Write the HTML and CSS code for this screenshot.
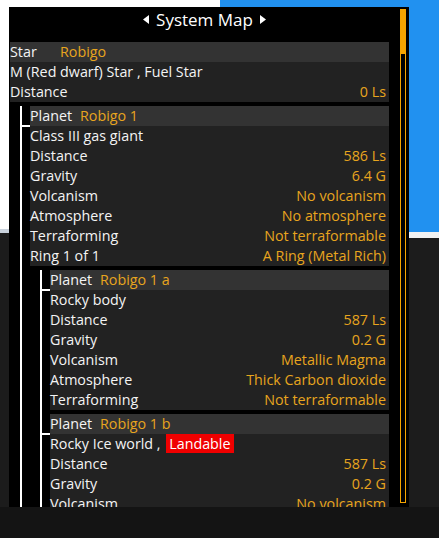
FILE: index.html
```html
<!DOCTYPE html>
<html lang="en">

<head>
    <meta charset="UTF-8">
    <meta name="viewport" content="width=device-width, initial-scale=1.0">
    <title>System Map</title>
    <link rel="stylesheet" href="styles.css">
</head>

<body>
    <div class="window">
        <div class="main">
            <!-- Title bar -->
            <div class="title">
                <svg class="arrow" width="7" height="9" viewBox="0 0 7 9"><polygon points="6,0 6,9 0,4.5" fill="#fff"/></svg>
                <span>System Map</span>
                <svg class="arrow" width="7" height="9" viewBox="0 0 7 9"><polygon points="1,0 1,9 7,4.5" fill="#fff"/></svg>
            </div>

            <!-- Tree of bodies -->
            <div class="tree">
                <div class="node">
                    <div class="row head"><span class="label">Star</span><span class="name">Robigo</span></div>
                    <div class="row"><span>M (Red dwarf) Star , Fuel Star</span></div>
                    <div class="row"><span>Distance</span><span class="val">0 Ls</span></div>

                    <div class="children">
                        <div class="node child">
                            <div class="row head"><span class="label">Planet</span><span class="name">Robigo 1</span></div>
                            <div class="row"><span>Class III gas giant</span></div>
                            <div class="row"><span>Distance</span><span class="val">586 Ls</span></div>
                            <div class="row"><span>Gravity</span><span class="val">6.4 G</span></div>
                            <div class="row"><span>Volcanism</span><span class="val">No volcanism</span></div>
                            <div class="row"><span>Atmosphere</span><span class="val">No atmosphere</span></div>
                            <div class="row"><span>Terraforming</span><span class="val">Not terraformable</span></div>
                            <div class="row"><span>Ring 1 of 1</span><span class="val">A Ring (Metal Rich)</span></div>

                            <div class="children">
                                <div class="node child">
                                    <div class="row head"><span class="label">Planet</span><span class="name">Robigo 1 a</span></div>
                                    <div class="row"><span>Rocky body</span></div>
                                    <div class="row"><span>Distance</span><span class="val">587 Ls</span></div>
                                    <div class="row"><span>Gravity</span><span class="val">0.2 G</span></div>
                                    <div class="row"><span>Volcanism</span><span class="val">Metallic Magma</span></div>
                                    <div class="row"><span>Atmosphere</span><span class="val">Thick Carbon dioxide</span></div>
                                    <div class="row"><span>Terraforming</span><span class="val">Not terraformable</span></div>
                                </div>
                                <div class="node child">
                                    <div class="row head"><span class="label">Planet</span><span class="name">Robigo 1 b</span></div>
                                    <div class="row"><span>Rocky Ice world ,&nbsp;<span class="badge">Landable</span></span></div>
                                    <div class="row"><span>Distance</span><span class="val">587 Ls</span></div>
                                    <div class="row"><span>Gravity</span><span class="val">0.2 G</span></div>
                                    <div class="row"><span>Volcanism</span><span class="val">No volcanism</span></div>
                                </div>
                            </div>
                        </div>
                    </div>
                </div>
            </div>
        </div>

        <!-- Scrollbar -->
        <div class="scrollbar">
            <div class="thumb"></div>
            <div class="track"></div>
        </div>
    </div>
</body>

</html>
```

FILE: styles.css
```css
/* Desktop behind the window */
body {
    margin: 0;
    width: 439px;
    height: 538px;
    overflow: hidden;
    position: relative;
    font-family: 'Open Sans', 'Noto Sans', sans-serif;
    background:
        linear-gradient(#ffffff, #ffffff) 0 0 / 220px 229px no-repeat,
        linear-gradient(#c9d2dc, #c9d2dc) 0 229px / 220px 4px no-repeat,
        linear-gradient(#2191f0, #2191f0) 220px 0 / 219px 232px no-repeat,
        linear-gradient(#f2f2f2, #f2f2f2) 220px 232px / 219px 6px no-repeat,
        linear-gradient(#141414, #141414) 0 507px / 439px 31px no-repeat,
        #1c1c1c;
}

/* Main window */
.window {
    position: absolute;
    left: 9px;
    top: 7px;
    width: 400px;
    height: 500px;
    background: #000;
    display: flex;
    overflow: hidden;
}

.main {
    width: 391px;
    display: flex;
    flex-direction: column;
}

.title {
    height: 35px;
    display: flex;
    justify-content: center;
    align-items: flex-start;
    gap: 6px;
    color: #fff;
    font-size: 17px;
    line-height: 26px;
    flex-shrink: 0;
}

.title .arrow {
    margin-top: 8px;
}

.tree {
    padding-left: 1px;
    width: 379px;
    font-size: 14.3px;
    color: #f4f4f4;
}

.row {
    height: 20px;
    line-height: 20px;
    background: #222222;
    display: flex;
    justify-content: space-between;
    padding-right: 3px;
    white-space: nowrap;
}

.row.head {
    background: #333333;
    justify-content: flex-start;
}

.label {
    width: 50px;
}

.name,
.val {
    color: #e8a51e;
}

.badge {
    background: #f00000;
    color: #fff;
    padding: 0 3px;
    margin-left: 2px;
    display: inline-block;
    line-height: 19px;
}

/* Tree lines */
.children {
    margin: 4px 0 0 10px;
    border-left: 2px solid #fff;
    padding-left: 8px;
    display: flex;
    flex-direction: column;
    gap: 4px;
}

.child {
    position: relative;
}

.child::before {
    content: '';
    position: absolute;
    left: -8px;
    top: 19px;
    width: 8px;
    height: 2px;
    background: #fff;
}

/* Scrollbar */
.scrollbar {
    padding: 2px 0 4px;
    width: 6px;
    display: flex;
    flex-direction: column;
}

.thumb {
    height: 44px;
    background: #f5a400;
}

.track {
    flex: 1;
    border: 1px solid #f5a400;
}
```
